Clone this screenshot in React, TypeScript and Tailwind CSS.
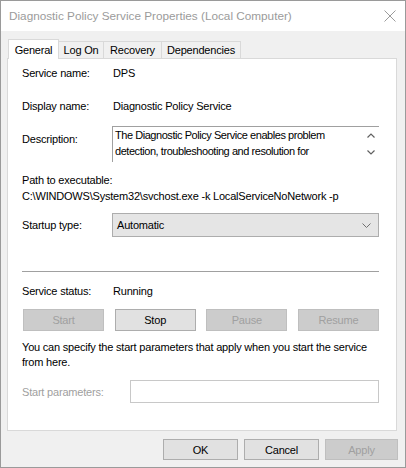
import React from "react";

const font = { fontFamily: '"Liberation Sans", Arial, sans-serif' };

function Btn({ label, disabled, w, h }: { label: string; disabled?: boolean; w: string; h: string }) {
  return (
    <div
      className={
        "flex items-center justify-center border shrink-0 " +
        w +
        " " +
        h +
        " " +
        (disabled
          ? "bg-[#cccccc] border-[#bfbfbf] text-[#a0a0a0]"
          : "bg-[#e1e1e1] border-[#adadad] text-black")
      }
    >
      {label}
    </div>
  );
}

export default function App() {
  return (
    <div
      className="w-[406px] h-[468px] bg-[#f0f0f0] border border-[#9a9a9a] flex flex-col text-[11px] leading-[16px] tracking-[-0.2px] text-black overflow-hidden"
      style={font}
    >
      {/* title bar */}
      <div className="h-[30px] bg-white flex items-center justify-between pl-[8px] pr-[9px] shrink-0">
        <span className="text-[#9b9b9b] text-[11.75px] tracking-normal">Diagnostic Policy Service Properties (Local Computer)</span>
        <svg width="12" height="12" viewBox="0 0 12 12">
          <path d="M0.5 0.5 L11.5 11.5 M11.5 0.5 L0.5 11.5" stroke="#9b9b9b" strokeWidth="1" />
        </svg>
      </div>

      <div className="flex flex-col pl-[6px] pr-[8px] pt-[7px]">
        {/* tabs */}
        <div className="flex items-end h-[20px] pl-[1px] relative z-10">
          <div className="w-[51px] h-[20px] bg-white border-t border-l border-r border-[#d9d9d9] flex items-start justify-center pt-[2px] -mb-[1px]">
            General
          </div>
          <div className="w-[45px] h-[17px] bg-[#f0f0f0] border-t border-r border-[#d9d9d9] flex items-center justify-center">
            Log On
          </div>
          <div className="w-[58px] h-[17px] bg-[#f0f0f0] border-t border-r border-[#d9d9d9] flex items-center justify-center">
            Recovery
          </div>
          <div className="w-[79px] h-[17px] bg-[#f0f0f0] border-t border-r border-[#d9d9d9] flex items-center justify-center">
            Dependencies
          </div>
        </div>

        {/* panel */}
        <div className="h-[373px] bg-white border border-[#d9d9d9] pl-[14px] pr-[17px] flex flex-col">
          <div className="flex h-[16px] mt-[6px]">
            <span className="w-[91px]">Service name:</span>
            <span>DPS</span>
          </div>
          <div className="flex h-[16px] mt-[17px]">
            <span className="w-[91px]">Display name:</span>
            <span>Diagnostic Policy Service</span>
          </div>
          <div className="flex mt-[12px] h-[36px]">
            <span className="w-[90px] pt-[5px]">Description:</span>
            <div className="flex-1 border-t border-l border-[#a0a0a0] flex">
              <div className="flex-1 pl-[2px] leading-[16px] tracking-[-0.45px] whitespace-nowrap">
                The Diagnostic Policy Service enables problem
                <br />
                detection, troubleshooting and resolution for
              </div>
              <div className="w-[17px] flex flex-col items-center justify-between pt-[6px] pb-[7px]">
                <svg width="8" height="5" viewBox="0 0 8 5">
                  <path d="M0.5 4.5 L4 1 L7.5 4.5" stroke="#606060" strokeWidth="1.2" fill="none" />
                </svg>
                <svg width="8" height="5" viewBox="0 0 8 5">
                  <path d="M0.5 0.5 L4 4 L7.5 0.5" stroke="#606060" strokeWidth="1.2" fill="none" />
                </svg>
              </div>
            </div>
          </div>
          <div className="mt-[10px] h-[16px]">Path to executable:</div>
          <div className="h-[16px] whitespace-nowrap">C:\WINDOWS\System32\svchost.exe -k LocalServiceNoNetwork -p</div>
          <div className="flex items-center mt-[9px] h-[24px]">
            <span className="w-[90px]">Startup type:</span>
            <div className="flex-1 h-[24px] bg-[#e5e5e5] border border-[#adadad] flex items-center justify-between pl-[4px] pr-[7px]">
              <span>Automatic</span>
              <svg width="9" height="5" viewBox="0 0 9 5">
                <path d="M0.5 0.5 L4.5 4.5 L8.5 0.5" stroke="#707070" strokeWidth="1" fill="none" />
              </svg>
            </div>
          </div>
          <div className="mt-[34px] h-px bg-[#a0a0a0]" />
          <div className="flex h-[16px] mt-[11px]">
            <span className="w-[91px]">Service status:</span>
            <span>Running</span>
          </div>
          <div className="flex justify-between mt-[10px] pl-[1px]">
            <Btn label="Start" disabled w="w-[81px]" h="h-[22px]" />
            <Btn label="Stop" w="w-[81px]" h="h-[22px]" />
            <Btn label="Pause" disabled w="w-[81px]" h="h-[22px]" />
            <Btn label="Resume" disabled w="w-[81px]" h="h-[22px]" />
          </div>
          <div className="mt-[9px] leading-[15px] whitespace-nowrap">
            You can specify the start parameters that apply when you start the service
            <br />
            from here.
          </div>
          <div className="flex items-center mt-[10px] h-[23px]">
            <span className="w-[108px] text-[#a0a0a0]">Start parameters:</span>
            <div className="flex-1 h-[23px] border border-[#c8c8c8] bg-white" />
          </div>
        </div>

        {/* footer */}
        <div className="flex gap-[6px] mt-[8px] pl-[156px]">
          <Btn label="OK" w="w-[75px]" h="h-[21px]" />
          <Btn label="Cancel" w="w-[75px]" h="h-[21px]" />
          <Btn label="Apply" disabled w="w-[73px]" h="h-[21px]" />
        </div>
      </div>
    </div>
  );
}
